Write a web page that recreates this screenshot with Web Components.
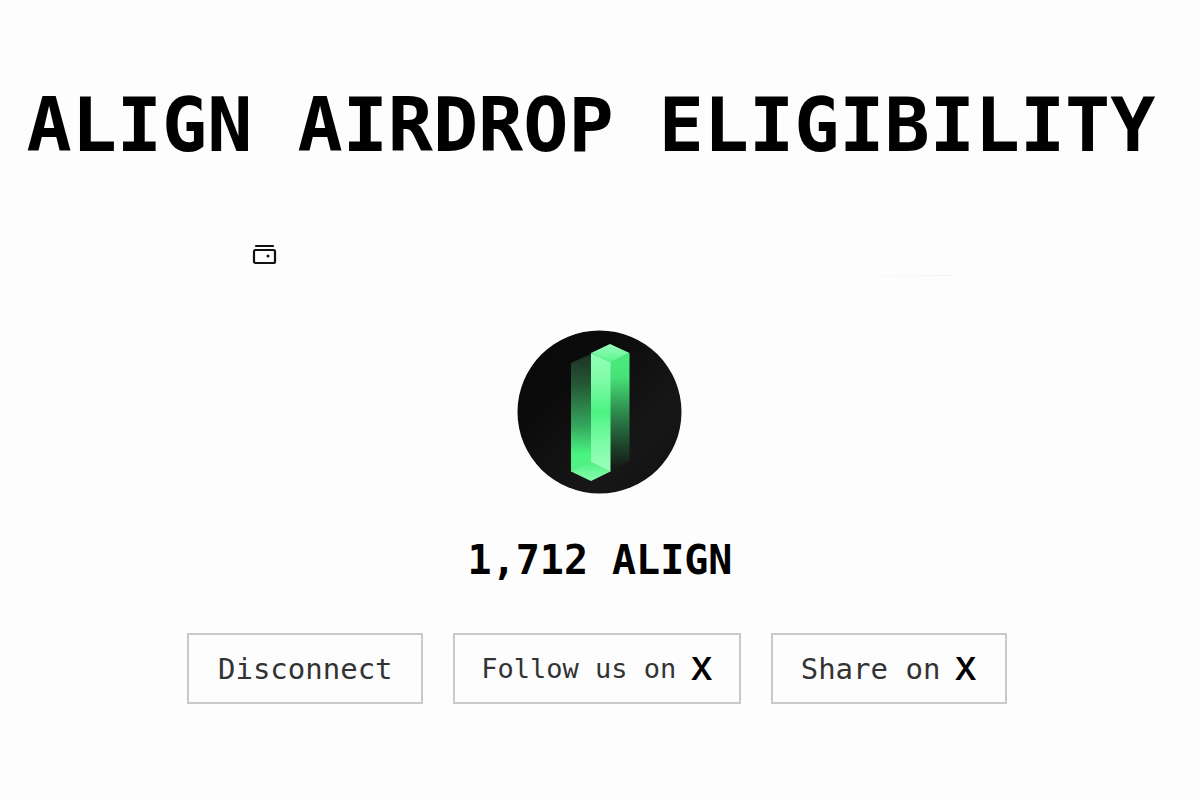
<!DOCTYPE html>
<html lang="en">
<head>
<meta charset="utf-8">
<meta name="viewport" content="width=device-width, initial-scale=1">
<title>ALIGN Airdrop Eligibility</title>
<style>
body { margin: 0; background: #fdfdfd; color: #000; font-family: "DejaVu Sans Mono", monospace; }
</style>
</head>
<body>
<airdrop-page>
  <span slot="title">ALIGN AIRDROP ELIGIBILITY</span>
  <wallet-bar slot="wallet"></wallet-bar>
  <token-amount slot="amount">1,712 ALIGN</token-amount>
  <action-button slot="actions">Disconnect</action-button>
  <action-button slot="actions" compact>Follow us on<x-mark slot="icon">X</x-mark></action-button>
  <action-button slot="actions">Share on<x-mark slot="icon">X</x-mark></action-button>
</airdrop-page>

<script>
const define = (name, html) => {
  const template = document.createElement("template");
  template.innerHTML = html;
  customElements.define(name, class extends HTMLElement {
    constructor() {
      super();
      this.attachShadow({ mode: "open" }).append(template.content.cloneNode(true));
    }
  });
};

define("x-mark", `
  <style>
    :host { display: block; color: #000; font-family: Inter, sans-serif; font-size: 31px; line-height: 36px; font-weight: 600; }
  </style>
  <slot></slot>`);

define("wallet-bar", `
  <style>
    :host { display: flex; height: 32px; padding: 0 248px 0 252px; justify-content: space-between; align-items: flex-start; }
    svg { display: block; width: 25px; height: 22px; }
    i { align-self: flex-end; width: 140px; height: 1px; background: linear-gradient(90deg, transparent, #f4f4f4); }
  </style>
  <svg viewBox="0 0 25 22" fill="none" stroke="#111" stroke-width="2.200" stroke-linecap="round" aria-hidden="true">
    <path d="M4 2h17"/><rect x="2" y="6" width="21" height="13" rx="1.500"/>
    <circle cx="16" cy="12" r="1.500" fill="#111" stroke="none"/>
  </svg>
  <i></i>`);

define("token-amount", `
  <style>
    :host { display: flex; flex-direction: column; align-items: center; gap: 42px; }
    svg { display: block; width: 166px; height: 164px; }
    p { margin: 0; font-size: 40px; line-height: 48px; font-weight: 700; }
  </style>
  <svg viewBox="0 0 166 164" aria-hidden="true">
    <defs>
      <linearGradient id="disc" x2="1" y2="1"><stop stop-color="#090909"/><stop offset=".3" stop-color="#0b0b0b"/><stop offset=".7" stop-color="#171717"/><stop offset="1" stop-color="#101010"/></linearGradient>
      <linearGradient id="left" x2="0" y2="1"><stop stop-color="#1c3324"/><stop offset=".25" stop-color="#245635"/><stop offset=".6" stop-color="#34a45c"/><stop offset=".85" stop-color="#48f580"/><stop offset="1" stop-color="#57ee88"/></linearGradient>
      <linearGradient id="front" x2="0" y2="1"><stop stop-color="#91ffb5"/><stop offset=".2" stop-color="#83fca9"/><stop offset=".5" stop-color="#4cf383"/><stop offset=".75" stop-color="#7cfba5"/><stop offset="1" stop-color="#9bffbc"/></linearGradient>
      <linearGradient id="right" x2="0" y2="1"><stop stop-color="#4cec7e"/><stop offset=".2" stop-color="#47e278"/><stop offset=".5" stop-color="#2e8b4e"/><stop offset=".8" stop-color="#1d4028"/><stop offset="1" stop-color="#141414"/></linearGradient>
      <linearGradient id="top" x2="0" y2="1"><stop stop-color="#9affbd"/><stop offset="1" stop-color="#59f28b"/></linearGradient>
      <linearGradient id="base" x2="0" y2="1"><stop stop-color="#50ef83"/><stop offset="1" stop-color="#88ffae"/></linearGradient>
    </defs>
    <ellipse cx="82.500" cy="82" rx="82" ry="81.500" fill="url(#disc)"/>
    <path fill="url(#left)" d="M54 33l20-9v109l-20 9z"/>
    <path fill="url(#right)" d="M93 32l19.500-9v108L93 141z"/>
    <path fill="url(#front)" d="M74 23l19.500 9v110L74 132.500z"/>
    <path fill="url(#top)" d="M74 23l19-9 19.500 9-19.500 9.500z"/>
    <path fill="url(#base)" d="M54 141.500L74 132l19.500 9.500L74 151z"/>
  </svg>
  <p><slot></slot></p>`);

define("action-button", `
  <style>
    :host { display: block; }
    button { display: flex; align-items: center; justify-content: center; gap: 14px; min-width: 236px; height: 71px; padding: 0 26px; margin: 0;
      border: 2px solid #c9c9c9; background: transparent; color: #333; font: inherit; font-size: 29px; line-height: 36px; white-space: nowrap; cursor: pointer; }
    :host([compact]) button { font-size: 27px; }
    button:hover { background: #f3f3f3; }
  </style>
  <button type="button"><span><slot></slot></span><slot name="icon"></slot></button>`);

define("airdrop-page", `
  <style>
    :host { display: block; box-sizing: border-box; min-height: 100vh; padding: 80px 0; }
    h1 { margin: 0; padding-right: 18px; text-align: center; font-size: 75px; line-height: 90px; font-weight: 700; }
    .wallet { padding-top: 74px; }
    .amount { padding-top: 54px; }
    .actions { display: flex; flex-wrap: wrap; justify-content: center; gap: 30px; padding: 49px 6px 0 0; }
  </style>
  <main>
    <h1><slot name="title"></slot></h1>
    <div class="wallet"><slot name="wallet"></slot></div>
    <div class="amount"><slot name="amount"></slot></div>
    <div class="actions"><slot name="actions"></slot></div>
  </main>`);
</script>
</body>
</html>
